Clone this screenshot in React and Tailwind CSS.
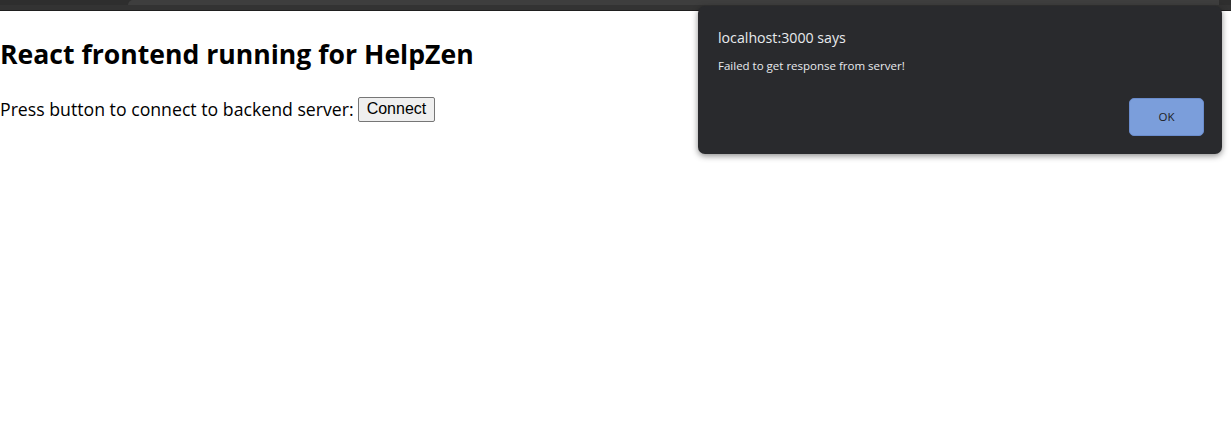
import React from "react";

const TopBar = () => (
  <div className="w-full">
    <div className="flex h-[5px] bg-[#2e2e2e]">
      <div className="w-[128px]" />
      <div className="flex-1 rounded-tl-[6px] bg-[#3e3e3e]" />
      <div className="w-[12px]" />
    </div>
    <div className="h-[5px] bg-[#333333]" />
    <div className="h-px bg-[#1f1f1f]" />
  </div>
);

const AlertDialog = () => (
  <div className="absolute left-[698px] top-[6px] flex h-[148px] w-[524px] flex-col rounded-[7px] bg-[#292a2d] pl-[20px] pr-[18px] pt-[23px] pb-[18px] font-['Open_Sans',sans-serif] text-[#e8eaed] shadow-[0_2px_6px_rgba(0,0,0,0.45)]">
    <div className="text-[14.2px] leading-[18px]">localhost:3000 says</div>
    <div className="mt-[11px] text-[11.5px] leading-[16px]">
      Failed to get response from server!
    </div>
    <div className="mt-auto flex justify-end">
      <button
        type="button"
        className="h-[38px] w-[75px] rounded-[5px] border border-[#6a8ccc] bg-[#7b9edb] text-[11.5px] text-[#202124]"
      >
        OK
      </button>
    </div>
  </div>
);

export default function App() {
  return (
    <div className="relative h-[434px] w-full overflow-hidden bg-white">
      <TopBar />
      <div className="font-['Open_Sans',sans-serif] text-black">
        <h1 className="mt-[25px] text-[26.6px] font-bold leading-[36px]">
          React frontend running for HelpZen
        </h1>
        <div className="mt-[24px] flex items-center text-[17.7px] leading-[26px]">
          <span>Press button to connect to backend server:</span>
          <button
            type="button"
            className="ml-[4px] h-[25px] rounded-[2px] border border-[#767676] bg-[#efefef] px-[8px] font-['Liberation_Sans',sans-serif] text-[16px] leading-[20px]"
          >
            Connect
          </button>
        </div>
      </div>
      <AlertDialog />
    </div>
  );
}
